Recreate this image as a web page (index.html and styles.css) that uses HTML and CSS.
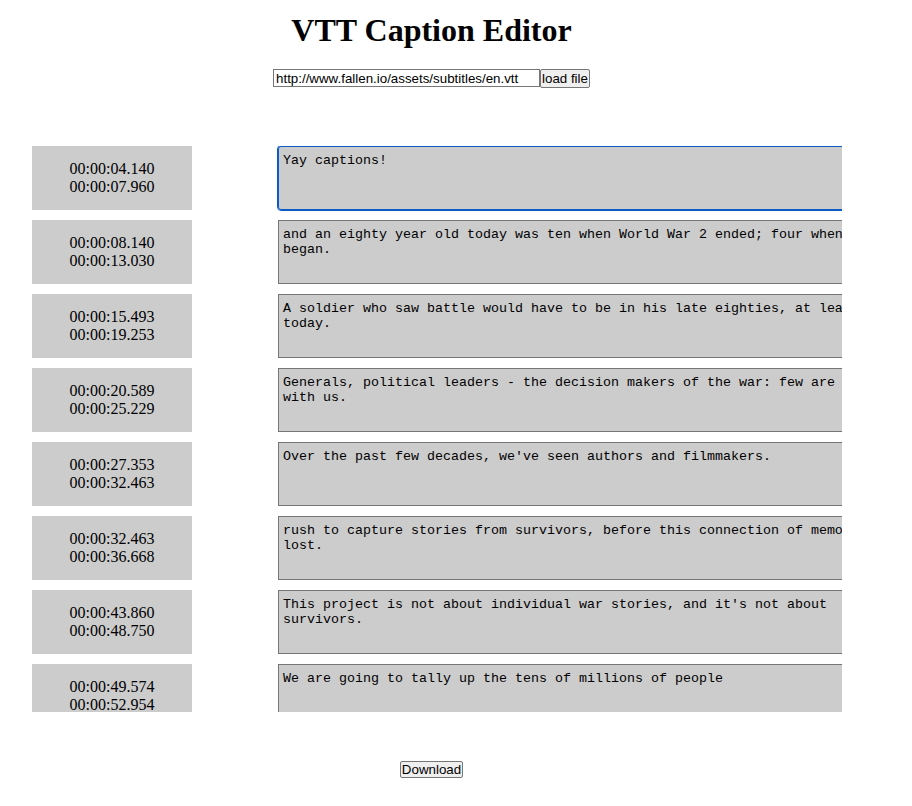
FILE: index.html
```html
<!DOCTYPE html>
<html>
<head>
<meta charset="utf-8">
<title>VTT Caption Editor</title>
<link rel="stylesheet" href="styles.css">
</head>
<body>
<main class="page">
  <h1 class="title">VTT Caption Editor</h1>
  <div class="loader"><input class="url" type="text" value="http://www.fallen.io/assets/subtitles/en.vtt"><button class="btn">load file</button></div>
  <div class="captions">
    <div class="row">
      <div class="time"><span>00:00:04.140</span><span>00:00:07.960</span></div>
      <textarea class="text focused">Yay captions!</textarea>
    </div>
    <div class="row">
      <div class="time"><span>00:00:08.140</span><span>00:00:13.030</span></div>
      <textarea class="text">and an eighty year old today was ten when World War 2 ended; four when it began.</textarea>
    </div>
    <div class="row">
      <div class="time"><span>00:00:15.493</span><span>00:00:19.253</span></div>
      <textarea class="text">A soldier who saw battle would have to be in his late eighties, at least today.</textarea>
    </div>
    <div class="row">
      <div class="time"><span>00:00:20.589</span><span>00:00:25.229</span></div>
      <textarea class="text">Generals, political leaders - the decision makers of the war: few are still with us.</textarea>
    </div>
    <div class="row">
      <div class="time"><span>00:00:27.353</span><span>00:00:32.463</span></div>
      <textarea class="text">Over the past few decades, we've seen authors and filmmakers.</textarea>
    </div>
    <div class="row">
      <div class="time"><span>00:00:32.463</span><span>00:00:36.668</span></div>
      <textarea class="text">rush to capture stories from survivors, before this connection of memory is lost.</textarea>
    </div>
    <div class="row">
      <div class="time"><span>00:00:43.860</span><span>00:00:48.750</span></div>
      <textarea class="text">This project is not about individual war stories, and it's not about survivors.</textarea>
    </div>
    <div class="row">
      <div class="time"><span>00:00:49.574</span><span>00:00:52.954</span></div>
      <textarea class="text">We are going to tally up the tens of millions of people</textarea>
    </div>
    <div class="row">
      <div class="time"><span>00:00:53.200</span><span>00:00:56.100</span></div>
      <textarea class="text">who died in the Second World War.</textarea>
    </div>
  </div>
  <div class="actions"><button class="btn btn-wide">Download</button></div>
</main>
</body>
</html>
```
FILE: styles.css
```css
html, body {
  background: #fff;
}
body {
  margin: 8px;
  font-family: "Liberation Serif", "Times New Roman", serif;
  color: #000;
}
.page {
  width: 847px;
  text-align: center;
}
.title {
  font-size: 32px;
  font-weight: bold;
  margin: 4px 0 20px;
  line-height: 37px;
}
.loader {
  display: flex;
  justify-content: center;
}
.url {
  width: 261px;
  height: 14px;
  margin: 0;
  padding: 1px 2px;
  border: 1px solid #767676;
  border-radius: 0;
  font-family: "Liberation Sans", Arial, sans-serif;
  font-size: 13.33px;
  color: #000;
  background: #fff;
  box-sizing: content-box;
}
.btn {
  margin: 0;
  padding: 1px 1px;
  border: 1px solid #767676;
  border-radius: 2px;
  background: #efefef;
  font-family: "Liberation Sans", Arial, sans-serif;
  font-size: 13.33px;
  color: #000;
  line-height: 15px;
}
.btn-wide {
  padding: 0 1px;
}
.captions {
  margin: 58px 0 0 24px;
  width: 810px;
  height: 566px;
  overflow: hidden;
  text-align: left;
}
.row {
  display: flex;
  align-items: flex-start;
  gap: 86px;
  margin-bottom: 10px;
}
.time {
  flex: 0 0 160px;
  height: 64px;
  background: #cccccc;
  display: flex;
  flex-direction: column;
  justify-content: center;
  align-items: center;
  font-size: 16px;
  line-height: 18px;
  box-sizing: border-box;
}
.text {
  flex: 0 0 622px;
  width: 622px;
  height: 64px;
  box-sizing: border-box;
  margin: 0;
  padding: 6px 2px 2px 4px;
  border: 1px solid #767676;
  background: #cccccc;
  font-family: "Liberation Mono", "Courier New", monospace;
  font-size: 13.33px;
  line-height: 15px;
  color: #000;
  resize: none;
  overflow: hidden;
}
.focused {
  border-color: #0b5bc6;
  outline: 1px solid #0b5bc6;
  border-radius: 3px;
}
.actions {
  margin-top: 49px;
  display: flex;
  justify-content: center;
}
```
